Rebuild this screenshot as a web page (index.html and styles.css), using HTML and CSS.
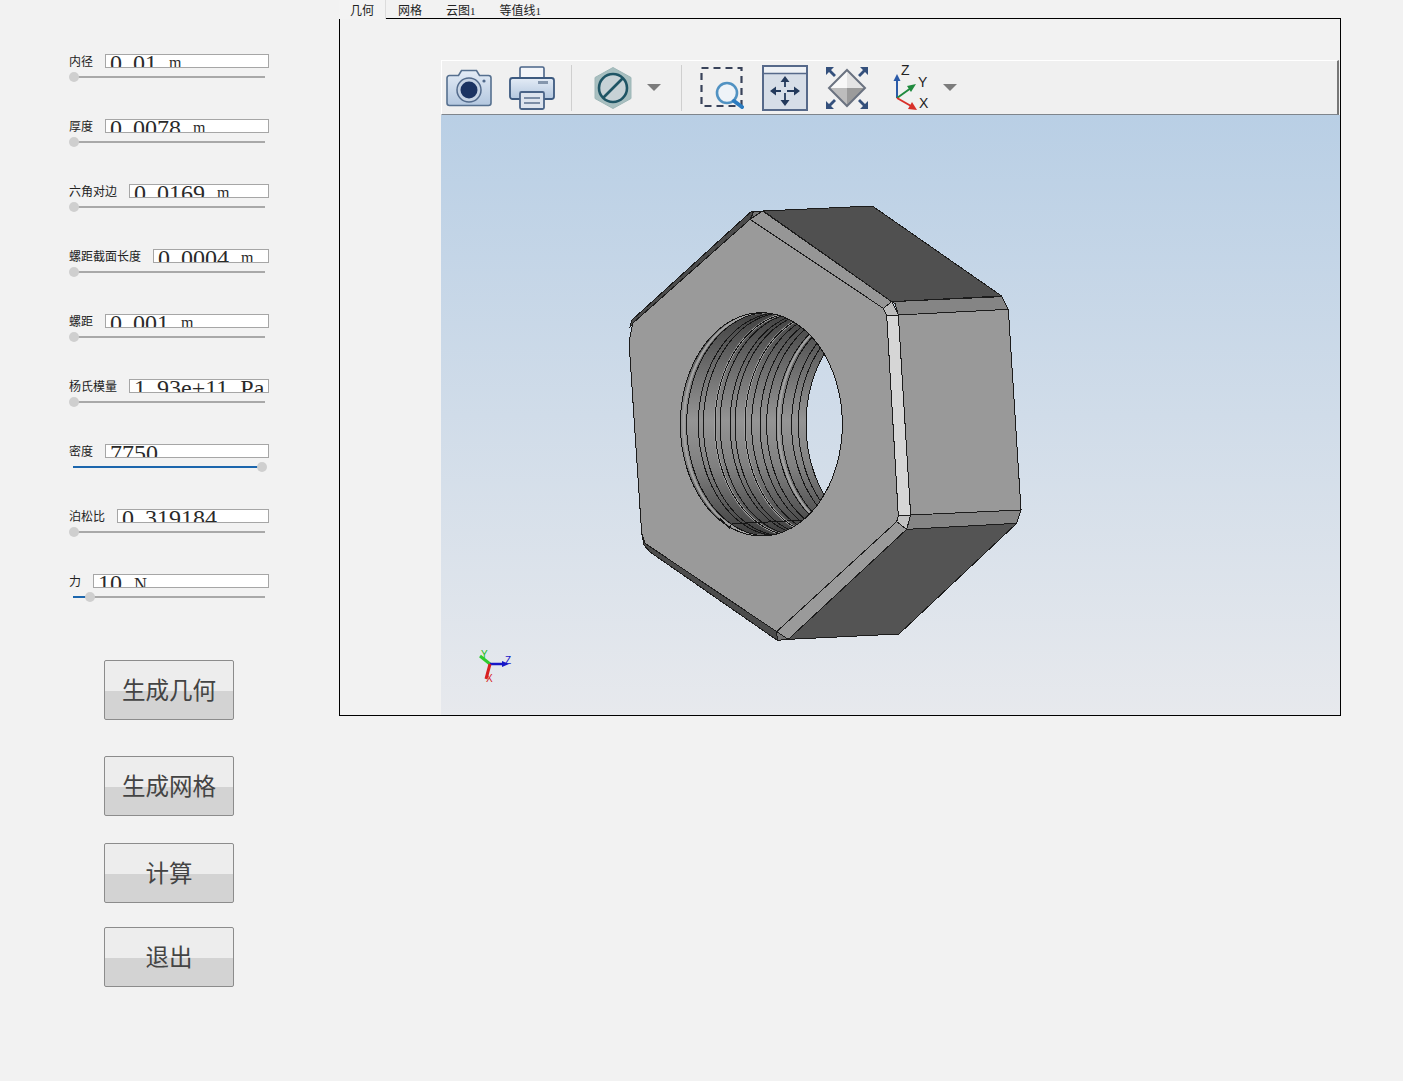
FILE: index.html
```html
<!DOCTYPE html>
<html lang="zh">
<head>
<meta charset="utf-8">
<title>几何</title>
<link rel="stylesheet" href="styles.css">
</head>
<body>
<div class="app">
  <aside class="side">
    <div class="param"><div class="line"><label class="lab">内径</label><div class="val">0<span class="dot">.</span>01 <span class="u-m">m</span></div></div><div class="slider"><i class="thumb" style="left:-4px"></i></div></div>
    <div class="param"><div class="line"><label class="lab">厚度</label><div class="val">0<span class="dot">.</span>0078 <span class="u-m">m</span></div></div><div class="slider"><i class="thumb" style="left:-4px"></i></div></div>
    <div class="param"><div class="line"><label class="lab">六角对边</label><div class="val">0<span class="dot">.</span>0169 <span class="u-m">m</span></div></div><div class="slider"><i class="thumb" style="left:-4px"></i></div></div>
    <div class="param"><div class="line"><label class="lab">螺距截面长度</label><div class="val">0<span class="dot">.</span>0004 <span class="u-m">m</span></div></div><div class="slider"><i class="thumb" style="left:-4px"></i></div></div>
    <div class="param"><div class="line"><label class="lab">螺距</label><div class="val">0<span class="dot">.</span>001 <span class="u-m">m</span></div></div><div class="slider"><i class="thumb" style="left:-4px"></i></div></div>
    <div class="param"><div class="line"><label class="lab">杨氏模量</label><div class="val">1<span class="dot">.</span>93e+11 Pa</div></div><div class="slider"><i class="thumb" style="left:-4px"></i></div></div>
    <div class="param"><div class="line"><label class="lab">密度</label><div class="val">7750</div></div><div class="slider"><b class="fill" style="width:186px"></b><i class="thumb" style="left:184px"></i></div></div>
    <div class="param"><div class="line"><label class="lab">泊松比</label><div class="val">0<span class="dot">.</span>319184</div></div><div class="slider"><i class="thumb" style="left:-4px"></i></div></div>
    <div class="param"><div class="line"><label class="lab">力</label><div class="val">10 <span class="u-n">N</span></div></div><div class="slider"><b class="fill" style="width:14px"></b><i class="thumb" style="left:12px"></i></div></div>
    <div class="buttons">
      <button class="btn btn-a">生成几何</button>
      <button class="btn btn-b">生成网格</button>
      <button class="btn btn-c">计算</button>
      <button class="btn btn-d">退出</button>
    </div>
  </aside>
  <main class="main">
    <nav class="tabs">
      <span class="tab active">几何</span>
      <span class="tab">网格</span>
      <span class="tab">云图<em class="num">1</em></span>
      <span class="tab">等值线<em class="num">1</em></span>
    </nav>
    <section class="panel">
      <div class="viewer">
        <div class="toolbar">
          <svg class="ic ic-cam" width="46" height="38" viewBox="0 0 46 38">
            <defs><linearGradient id="gb" x1="0" y1="0" x2="0" y2="1"><stop offset="0" stop-color="#e4ecf6"/><stop offset="1" stop-color="#b3c7df"/></linearGradient></defs>
            <path d="M3.500 6.500h9l3-5h15l3 5h9a2.500 2.500 0 0 1 2.500 2.500v25a2.500 2.500 0 0 1-2.500 2.500h-39a2.500 2.500 0 0 1-2.500-2.500v-25a2.500 2.500 0 0 1 2.500-2.500z" fill="url(#gb)" stroke="#56708f" stroke-width="1.600"/>
            <circle cx="23" cy="21" r="12" fill="#c6d3e4" stroke="#536b8c" stroke-width="1.500"/>
            <circle cx="23" cy="21" r="8.500" fill="#1b3362"/>
            <circle cx="38" cy="12" r="1.600" fill="#516a8c"/>
          </svg>
          <svg class="ic ic-print" width="46" height="44" viewBox="0 0 46 44">
            <rect x="11" y="1" width="24" height="14" rx="1.500" fill="#f3f5f9" stroke="#4a6488" stroke-width="1.600"/>
            <rect x="1" y="12" width="44" height="21" rx="2.500" fill="url(#gb)" stroke="#3d5a80" stroke-width="1.800"/>
            <rect x="29" y="15" width="10" height="3" fill="#8496ad"/>
            <rect x="11" y="26" width="24" height="17" rx="1.500" fill="#dde4ee" stroke="#4a6488" stroke-width="1.800"/>
            <path d="M15 32h16M15 37h16" stroke="#7b8da6" stroke-width="1.800"/>
          </svg>
          <span class="sep sep-a"></span>
          <svg class="ic ic-hex" width="38" height="42" viewBox="0 0 38 42">
            <polygon points="19,0.500 37,10.500 37,31.500 19,41.500 1,31.500 1,10.500" fill="#a8bfc0" stroke="#9db6b7"/>
            <circle cx="19" cy="21" r="14" fill="#c7d2d6" stroke="#1f5565" stroke-width="2.600"/>
            <path d="M9 31L29 11" stroke="#1f5565" stroke-width="2.600"/>
          </svg>
          <span class="caret caret-a"></span>
          <span class="sep sep-b"></span>
          <svg class="ic ic-zoom" width="44" height="44" viewBox="0 0 44 44">
            <rect x="1.500" y="2" width="40" height="38" fill="none" stroke="#39435a" stroke-width="2.200" stroke-dasharray="7 5"/>
            <circle cx="27" cy="27" r="10" fill="#eef3f8" stroke="#5192c2" stroke-width="2.600"/>
            <path d="M34 35L42 41" stroke="#2c7cc0" stroke-width="4" stroke-linecap="round"/>
          </svg>
          <svg class="ic ic-move" width="46" height="46" viewBox="0 0 46 46">
            <rect x="1" y="1" width="44" height="44" fill="#d7deE8" stroke="#56698a" stroke-width="2"/>
            <rect x="2" y="2" width="42" height="6" fill="#eef1f5"/>
            <path d="M2 8.500h42" stroke="#56698a" stroke-width="1.500"/>
            <path d="M23 14v24M11 26h24" stroke="#243a5c" stroke-width="1.800" stroke-dasharray="7 6" stroke-dashoffset="-1"/>
            <path d="M23 11l-4.500 6h9zM23 41l-4.500-6h9zM8 26l6-4.500v9zM38 26l-6-4.500v9z" fill="#243a5c"/>
          </svg>
          <svg class="ic ic-fit" width="46" height="46" viewBox="0 0 46 46">
            <polygon points="23,5 23,23 5,23" fill="#f8f8f8"/>
            <polygon points="23,5 41,23 23,23" fill="#e4e4e4"/>
            <polygon points="5,23 23,23 23,41" fill="#bdbdbd"/>
            <polygon points="41,23 23,23 23,41" fill="#9b9b9b"/>
            <polygon points="23,5 41,23 23,41 5,23" fill="none" stroke="#6a7280" stroke-width="2"/>
            <path d="M2 2l8 0-3 3 5 5-2 2-5-5-3 3zM44 2l-8 0 3 3-5 5 2 2 5-5 3 3zM2 44l8 0-3-3 5-5-2-2-5 5-3-3zM44 44l-8 0 3-3-5-5 2-2 5 5 3-3z" fill="#34507c"/>
          </svg>
          <svg class="ic ic-axes" width="38" height="46" viewBox="0 0 38 46">
            <path d="M4 33V14" stroke="#2a5aa8" stroke-width="2"/><polygon points="4,9 0.500,16 7.500,16" fill="#2a5aa8"/>
            <path d="M4 33L18 23" stroke="#1f8a3e" stroke-width="2"/><polygon points="23,19 14,21 18,27" fill="#1f8a3e"/>
            <path d="M4 33L18 41" stroke="#d8302a" stroke-width="2"/><polygon points="24,45 15,44 19,37" fill="#d8302a"/>
            <text class="axt" x="8" y="10">Z</text><text class="axt" x="25" y="22">Y</text><text class="axt" x="26" y="43">X</text>
          </svg>
          <span class="caret caret-b"></span>
        </div>
        <svg class="scene" width="899" height="600" viewBox="0 0 899 600">
          <defs>
            <linearGradient id="sky" x1="0" y1="0" x2="0" y2="1"><stop offset="0" stop-color="#b9cfe5"/><stop offset="1" stop-color="#e7e9ed"/></linearGradient>
            <linearGradient id="bore" x1="0" y1="0" x2="0" y2="1"><stop offset="0" stop-color="#3e3e3e"/><stop offset=".25" stop-color="#6c6c6c"/><stop offset=".48" stop-color="#949494"/><stop offset=".68" stop-color="#808080"/><stop offset="1" stop-color="#3a3a3a"/></linearGradient>
            <linearGradient id="lens" x1="0" y1="0" x2="0" y2="1"><stop offset="0" stop-color="#cbd9e9"/><stop offset="1" stop-color="#d6dfe9"/></linearGradient>
            <clipPath id="hole"><ellipse cx="424" cy="673" rx="243" ry="335"/></clipPath>
          </defs>
          <rect width="899" height="600" fill="url(#sky)"/>
          <svg x="179" y="85" width="410" height="450" viewBox="0 0 1230 1350">
            <g class="edges">
              <polygon points="30,380 36,360 392,36 400,35 390,60" fill="#4c4c4c"/>
              <polygon points="65,1000 72,1035 90,1056 472,1321 470,1295" fill="#4c4c4c"/>
              <polygon points="430,33 757,18 1145,288 815,305" fill="#505050"/>
              <polygon points="400,35 428,33 392,60" fill="#767676"/>
              <polygon points="390,58 428,33 815,305 790,325" fill="#969696"/>
              <polygon points="815,305 1145,290 1165,328 835,345 825,310" fill="#858585"/>
              <polygon points="835,345 1165,328 1203,930 872,945" fill="#999999"/>
              <polygon points="790,325 815,305 835,345 800,345" fill="#bdbdbd"/>
              <polygon points="800,345 835,345 872,945 835,948" fill="#d6d6d6"/>
              <polygon points="872,945 1203,930 1190,970 860,988" fill="#858585"/>
              <polygon points="835,948 872,945 860,988 830,965" fill="#c2c2c2"/>
              <polygon points="860,988 1190,970 837,1302 505,1318" fill="#545454"/>
              <polygon points="830,965 860,988 505,1318 470,1295" fill="#9a9a9a"/>
              <polygon points="470,1295 505,1318 472,1321" fill="#767676"/>
              <polygon points="390,58 790,325 800,345 835,948 830,965 470,1295 75,1030 65,1000 27,425 38,370" fill="#9a9a9a"/>
            </g>
            <g clip-path="url(#hole)">
              <rect x="170" y="330" width="510" height="690" fill="url(#bore)"/>
              <path d="M434 338A243 335 0 0 0 434 1008M528 338A243 335 0 0 0 528 1008M618 338A243 335 0 0 0 618 1008M718 338A243 335 0 0 0 718 1008" fill="none" stroke="#a2a2a2" stroke-width="7"/>
              <path d="M801 338A243 335 0 0 0 801 1008A243 335 0 0 0 801 338Z" fill="url(#lens)"/>
              <path class="threads" d="M443 338A243 335 0 0 0 443 1008M478 338A243 335 0 0 0 478 1008M493 338A243 335 0 0 0 493 1008M528 338A243 335 0 0 0 528 1008M543 338A243 335 0 0 0 543 1008M573 338A243 335 0 0 0 573 1008M588 338A243 335 0 0 0 588 1008M618 338A243 335 0 0 0 618 1008M638 338A243 335 0 0 0 638 1008M663 338A243 335 0 0 0 663 1008M683 338A243 335 0 0 0 683 1008M711 338A243 335 0 0 0 711 1008M728 338A243 335 0 0 0 728 1008M758 338A243 335 0 0 0 758 1008M778 338A243 335 0 0 0 778 1008M801 338A243 335 0 0 0 801 1008"/>
            </g>
            <ellipse class="threads" cx="424" cy="673" rx="243" ry="335"/>
            <path class="threads" d="M300 955L328 985 335 972 395 968 470 965 550 960"/>
          </svg>
          <g class="mini">
            <path d="M49 549L39 541" stroke="#2ecc2e" stroke-width="3"/>
            <path d="M49 549H63" stroke="#1616c8" stroke-width="2.500"/><polygon points="68,549 61,546 61,552" fill="#1616c8"/>
            <path d="M49 549L45 564" stroke="#d82020" stroke-width="3"/>
            <text class="mt mt-y" x="40" y="543">Y</text><text class="mt mt-z" x="64" y="549">Z</text><text class="mt mt-x" x="45" y="567">X</text>
          </g>
        </svg>
      </div>
    </section>
  </main>
</div>
</body>
</html>
```

FILE: styles.css
```css
* { box-sizing: border-box; }
html, body { margin: 0; padding: 0; }
body {
  background: #f2f2f2;
  color: #222;
  font-family: "Noto Sans CJK SC", "Noto Sans", sans-serif;
  overflow: hidden;
}
.app { display: flex; align-items: flex-start; height: 1081px; }

/* left column */
.side { width: 339px; flex: none; padding: 54px 70px 0 69px; }
.param { height: 65px; }
.line { display: flex; align-items: center; height: 14px; gap: 12px; }
.lab { font-size: 12px; line-height: 14px; white-space: nowrap; color: #222; }
.val {
  flex: 1;
  height: 14px;
  border: 1px solid #a6a6a6;
  background: #fff;
  padding-left: 4px;
  overflow: hidden;
  font: 24px/16px "Liberation Serif", serif;
  color: #2a2a2a;
  white-space: pre;
  word-spacing: 6px;
}
.dot { letter-spacing: 5px; }
.u-m { font-size: 16px; position: relative; top: -3px; }
.u-n { font-size: 18px; }
.slider {
  position: relative;
  width: 192px;
  height: 2px;
  margin: 8px 0 0 4px;
  background: #a9a9a9;
}
.fill { display: block; height: 2px; background: #1c66ad; }
.thumb {
  position: absolute;
  top: -4px;
  width: 10px;
  height: 10px;
  border-radius: 50%;
  background: #cfcfcf;
}

/* buttons */
.buttons { display: flex; flex-direction: column; align-items: flex-start; padding: 21px 0 0 35px; }
.btn {
  width: 130px;
  height: 60px;
  padding: 0 0 2px;
  border: 1px solid #8c8c8c;
  border-radius: 2px;
  background: linear-gradient(#ededed 0, #ededed 52%, #d3d3d3 52%, #d3d3d3 100%);
  font-family: "Noto Sans CJK SC", sans-serif;
  font-size: 23.500px;
  font-weight: 400;
  color: #444;
}
.btn-b { margin-top: 36px; }
.btn-c { margin-top: 27px; }
.btn-d { margin-top: 24px; }

/* right */
.main { width: 1002px; flex: none; }
.tabs { display: flex; height: 18px; font-size: 12px; line-height: 19px; }
.tab { padding: 0 12px; color: #222; white-space: nowrap; }
.tab.active { padding-left: 11px; background: #f3f3f3; border-right: 1px solid #dcdcdc; padding-right: 11px; margin-bottom: -1px; height: 19px; position: relative; z-index: 1; }
.num { font: 11px "Liberation Serif", serif; }
.panel {
  height: 698px;
  border: 1px solid #000;
  padding: 41px 0 0 101px;
  background: #f2f2f2;
}
.viewer { width: 899px; }
.toolbar {
  display: flex;
  align-items: center;
  height: 55px;
  padding-left: 4px;
  background: #f0f0f0;
  border-top: 1px solid #fff;
  border-left: 1px solid #fff;
  border-right: 2px solid #777;
  border-bottom: 1px solid #7f858c;
  margin-right: 1px;
}
.ic { flex: none; display: block; }
.ic-cam { margin-left: 0; }
.ic-print { margin-left: 17px; }
.ic-hex { margin-left: 22px; }
.ic-zoom { margin-left: 18px; }
.ic-move { margin-left: 18px; }
.ic-fit { margin-left: 16px; }
.ic-axes { margin-left: 23px; }
.sep { flex: none; width: 1px; height: 46px; background: #cfcfcf; }
.sep-a { margin-left: 16px; }
.sep-b { margin-left: 20px; }
.caret { flex: none; width: 0; height: 0; border-left: 7px solid transparent; border-right: 7px solid transparent; border-top: 7px solid #7c7c7c; }
.caret-a { margin-left: 15px; }
.caret-b { margin-left: 12px; }
.axt { font: 14px "Liberation Sans", sans-serif; fill: #222; }
.scene { display: block; }
.edges polygon { stroke: #1c1c1c; stroke-width: 3; shape-rendering: crispEdges; }
.threads { fill: none; stroke: #161616; stroke-width: 3; shape-rendering: crispEdges; }
.mt { font: 10px "Liberation Sans", sans-serif; }
.mt-y { fill: #22bb22; }
.mt-z { fill: #1616c8; }
.mt-x { fill: #d82020; }
```
